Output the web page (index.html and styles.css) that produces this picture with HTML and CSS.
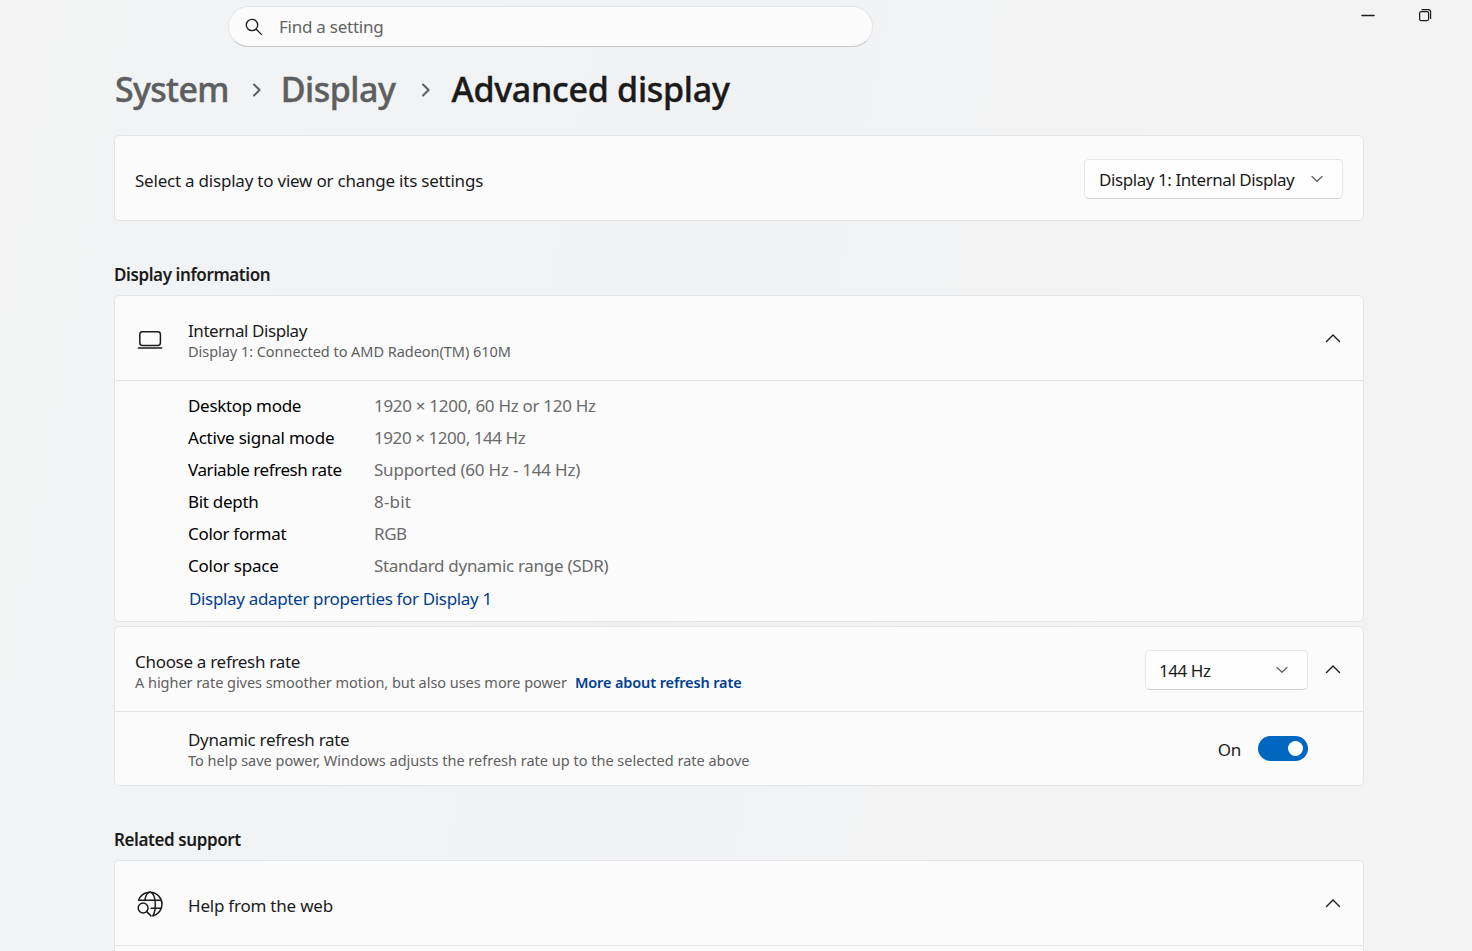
FILE: index.html
```html
<!DOCTYPE html>
<html lang="en">
<head>
    <meta charset="UTF-8">
    <meta name="viewport" content="width=device-width, initial-scale=1.0">
    <title>Settings</title>
    <link rel="stylesheet" href="styles.css">
</head>
<body>
    <header class="titlebar">
        <div class="search">
            <svg class="search-icon" width="18" height="18" viewBox="0 0 18 18">
                <circle cx="7" cy="7" r="5.7"/>
                <path d="M11.2 11.2L16.4 16.4"/>
            </svg>
            <span class="search-text">Find a setting</span>
        </div>
        <div class="window-buttons">
            <svg width="14" height="14" viewBox="0 0 14 14">
                <path d="M1 7.5H13"/>
            </svg>
            <svg class="restore" width="14" height="14" viewBox="0 0 14 14">
                <rect x="1.6" y="3.6" width="9" height="9" rx="1.5"/>
                <path d="M4 1.6H10.2A2.4 2.4 0 0 1 12.6 4V10.4"/>
            </svg>
        </div>
    </header>

    <main class="page">
        <nav class="breadcrumb">
            <span class="system">System</span>
            <svg class="crumb-arrow" width="10" height="14" viewBox="0 0 10 14"><path d="M2 1.5L7.6 7L2 12.5"/></svg>
            <span>Display</span>
            <svg class="crumb-arrow last" width="10" height="14" viewBox="0 0 10 14"><path d="M2 1.5L7.6 7L2 12.5"/></svg>
            <span class="current">Advanced display</span>
        </nav>

        <section class="card">
            <div class="row">
                <div class="texts single">
                    <div class="label loose">Select a display to view or change its settings</div>
                </div>
                <div class="dropdown display-dropdown">
                    <span class="tight">Display 1: Internal Display</span>
                    <svg class="chevron-down" width="12" height="8" viewBox="0 0 12 8"><path d="M1 1.5L6 6.2L11 1.5"/></svg>
                </div>
            </div>
        </section>

        <h2 class="heading">Display information</h2>
        <section class="card">
            <div class="row">
                <svg class="row-icon" width="26" height="26" viewBox="0 0 26 26">
                    <rect x="2.8" y="5.8" width="20.6" height="13.6" rx="2.6"/>
                    <path d="M1.4 22H24.6"/>
                </svg>
                <div class="texts">
                    <div class="label tight">Internal Display</div>
                    <div class="sub">Display 1: Connected to AMD Radeon(TM) 610M</div>
                </div>
                <svg class="chevron-up" width="16" height="10" viewBox="0 0 16 10"><path d="M1.5 8.5L8 2L14.5 8.5"/></svg>
            </div>
            <div class="details">
                <dl class="specs">
                    <dt>Desktop mode</dt><dd>1920 × 1200, 60 Hz or 120 Hz</dd>
                    <dt class="loose">Active signal mode</dt><dd class="tight">1920 × 1200, 144 Hz</dd>
                    <dt class="tight">Variable refresh rate</dt><dd class="loose">Supported (60 Hz - 144 Hz)</dd>
                    <dt>Bit depth</dt><dd class="wide">8-bit</dd>
                    <dt>Color format</dt><dd class="tight">RGB</dd>
                    <dt class="loose">Color space</dt><dd>Standard dynamic range (SDR)</dd>
                </dl>
                <a class="adapter-link">Display adapter properties for Display 1</a>
            </div>
        </section>

        <section class="card refresh-card">
            <div class="row">
                <div class="texts">
                    <div class="label">Choose a refresh rate</div>
                    <div class="sub">A higher rate gives smoother motion, but also uses more power<a class="more-link">More about refresh rate</a></div>
                </div>
                <div class="dropdown rate-dropdown">
                    <span class="tight">144 Hz</span>
                    <svg class="chevron-down" width="12" height="8" viewBox="0 0 12 8"><path d="M1 1.5L6 6.2L11 1.5"/></svg>
                </div>
                <svg class="chevron-up" width="16" height="10" viewBox="0 0 16 10"><path d="M1.5 8.5L8 2L14.5 8.5"/></svg>
            </div>
            <div class="sub-row">
                <div>
                    <div class="label">Dynamic refresh rate</div>
                    <div class="sub adjusts">To help save power, Windows adjusts the refresh rate up to the selected rate above</div>
                </div>
                <span class="toggle-label">On</span>
                <span class="toggle"><span class="knob"></span></span>
            </div>
        </section>

        <h2 class="heading">Related support</h2>
        <section class="card support-card">
            <div class="row">
                <svg class="row-icon" width="26" height="26" viewBox="0 0 26 26">
                    <path d="M1.6 9.2A12 12 0 1 1 16 24.8"/>
                    <path d="M2.4 9.2H24.2M14.2 17.2H24.2"/>
                    <path d="M7.8 9.2C8.7 4.2 10.7 1.3 13 1.3C16.2 1.3 18.3 6.5 18.3 13C18.3 18 17.6 22 16 24.8"/>
                    <circle cx="6.1" cy="17" r="4.9"/>
                    <path d="M9.7 20.6L14 24.9"/>
                </svg>
                <div class="texts single">
                    <div class="label loose">Help from the web</div>
                </div>
                <svg class="chevron-up" width="16" height="10" viewBox="0 0 16 10"><path d="M1.5 8.5L8 2L14.5 8.5"/></svg>
            </div>
        </section>
    </main>
</body>
</html>
```
FILE: styles.css
```css
* {
    box-sizing: border-box;
}
body {
    margin: 0;
    height: 951px;
    overflow: hidden;
    background: linear-gradient(100deg, #f3f3f3 0%, #f1f3f4 12%, #f1f2f4 45%, #f3f3f3 80%);
    color: #1b1b1b;
    font-family: "Noto Sans", "Open Sans", sans-serif;
    font-size: 17px;
    letter-spacing: -0.3px;
}
svg {
    display: block;
    flex: none;
    fill: none;
    stroke: #1b1b1b;
    stroke-width: 1.5;
    stroke-linecap: round;
    stroke-linejoin: round;
}
span, dt, dd, a, .label, .sub {
    white-space: nowrap;
}

/* letter spacing tweaks */
.tight {
    letter-spacing: -0.43px;
}
.loose {
    letter-spacing: -0.22px;
}
.wide {
    letter-spacing: 0.2px;
}

/* title bar */
.titlebar {
    display: flex;
    justify-content: space-between;
    height: 47px;
    padding: 6px 40px 0 228px;
}
.search {
    display: flex;
    align-items: center;
    width: 645px;
    height: 41px;
    padding-left: 16px;
    background: #fbfbfb;
    border: 1px solid #e4e5e7;
    border-bottom-color: #c6c7c9;
    border-radius: 21px;
}
.search-icon {
    margin-right: 16px;
    stroke-width: 1.3;
}
.search-text {
    color: #636363;
    letter-spacing: -0.25px;
}
.window-buttons {
    display: flex;
    gap: 43px;
    padding-top: 2px;
}
.restore {
    stroke-width: 1.2;
}

/* breadcrumb */
.page {
    width: 1250px;
    margin-left: 114px;
}
.breadcrumb {
    display: flex;
    align-items: center;
    height: 88px;
    padding: 0 0 4px 1px;
    font-size: 34px;
    font-weight: 500;
    letter-spacing: -0.5px;
    color: #5d5e5f;
    -webkit-text-stroke: 0.4px;
}
.system {
    letter-spacing: -0.7px;
}
.crumb-arrow {
    margin: 2px 19px 0 23px;
    stroke: #5d5e5f;
    stroke-width: 2;
}
.crumb-arrow.last {
    margin: 2px 20px 0 26px;
}
.current {
    color: #1b1b1b;
    letter-spacing: -0.28px;
}

/* cards */
.card {
    background: #fbfbfb;
    border: 1px solid #e4e5e6;
    border-radius: 5px;
}
.row {
    display: flex;
    align-items: center;
    height: 84px;
    padding: 0 20px;
}
.row-icon {
    margin: 2px 25px 0 2px;
}
.texts {
    flex: 1;
    padding-top: 4px;
}
.texts.single {
    padding-top: 6px;
}
.label {
    line-height: 22px;
}
.sub {
    font-size: 14.5px;
    line-height: 18px;
    color: #606060;
    letter-spacing: -0.04px;
}
.adjusts {
    letter-spacing: 0;
}
.heading {
    height: 74px;
    margin: 0;
    padding-top: 42px;
    font-size: 17px;
    font-weight: 600;
    line-height: 24px;
    letter-spacing: -0.4px;
}
.dropdown {
    display: flex;
    align-items: center;
    justify-content: space-between;
    height: 40px;
    margin-top: 2px;
    padding: 0 19px 0 14px;
    background: #fefefe;
    border: 1px solid #e6e6e6;
    border-bottom-color: #cfcfcf;
    border-radius: 5px;
}
.display-dropdown {
    width: 259px;
}
.rate-dropdown {
    width: 163px;
    margin-right: 17px;
    padding-left: 13px;
}
.chevron-down {
    stroke: #606060;
    stroke-width: 1.3;
}
.chevron-up {
    margin-right: 2px;
    stroke-width: 1.4;
}

/* monitor details */
.details {
    height: 241px;
    padding: 9px 0 0 73px;
    border-top: 1px solid #e4e5e6;
}
.specs {
    display: grid;
    grid-template-columns: 186px auto;
    grid-auto-rows: 32px;
    margin: 0;
    line-height: 32px;
    color: #000;
}
.specs dd {
    margin: 0;
    color: #6a6a6a;
}
.adapter-link {
    display: block;
    padding-left: 1px;
    line-height: 34px;
    letter-spacing: -0.34px;
    color: #003e92;
}

/* refresh rate */
.refresh-card {
    margin-top: 4px;
}
.more-link {
    margin-left: 8px;
    font-weight: 600;
    letter-spacing: -0.12px;
    color: #003e92;
}
.sub-row {
    display: flex;
    align-items: center;
    height: 74px;
    padding: 0 55px 0 73px;
    border-top: 1px solid #e4e5e6;
}
.toggle-label {
    margin: 1px 17px 0 auto;
}
.toggle {
    display: flex;
    align-items: center;
    justify-content: flex-end;
    width: 50px;
    height: 25px;
    padding-right: 5px;
    background: #0067c0;
    border-radius: 13px;
}
.knob {
    width: 15px;
    height: 15px;
    background: #fff;
    border-radius: 50%;
}

/* continues below the window edge */
.support-card {
    height: 91px;
    border-bottom: 0;
    border-radius: 5px 5px 0 0;
}
.support-card .row {
    height: 85px;
    border-bottom: 1px solid #e4e5e6;
}
```
